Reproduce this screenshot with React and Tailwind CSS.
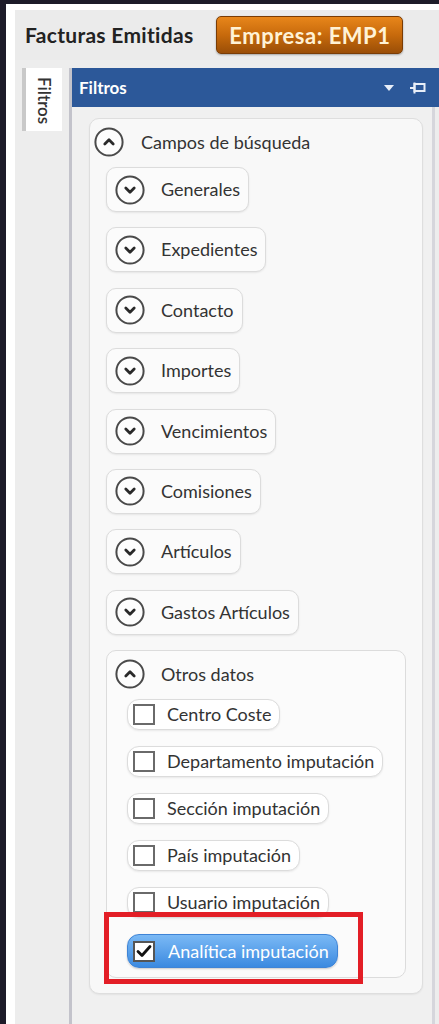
import React from "react";

const font = { fontFamily: 'Lato, "Open Sans", "Liberation Sans", sans-serif' };

function CircleChevron({ up = false }) {
  return (
    <svg width="30" height="30" viewBox="0 0 30 30" className="shrink-0">
      <circle cx="15" cy="15" r="13.6" fill="#fdfdfd" stroke="#4a4a4a" strokeWidth="2" />
      {up ? (
        <path d="M10.8 17 L15 12.8 L19.2 17" fill="none" stroke="#2a2a2a" strokeWidth="2.8" strokeLinecap="round" strokeLinejoin="round" />
      ) : (
        <path d="M10.8 13 L15 17.2 L19.2 13" fill="none" stroke="#2a2a2a" strokeWidth="2.8" strokeLinecap="round" strokeLinejoin="round" />
      )}
    </svg>
  );
}

function Pill({ label }) {
  return (
    <div className="self-start h-[45px] flex items-center pl-[8px] pr-[8px] gap-[16px] rounded-[10px] border border-[#dcdcdc] bg-[#fbfbfb] shadow-[0_1px_2px_rgba(0,0,0,0.08)]">
      <CircleChevron />
      <span className="text-[18px] text-[#333]">{label}</span>
    </div>
  );
}

function CheckPill({ label, checked = false }) {
  if (checked) {
    return (
      <div className="self-start h-[34px] flex items-center pl-[5px] pr-[8px] gap-[13px] rounded-[12px] border border-[#3f84d6] bg-gradient-to-b from-[#7ab9f5] to-[#3b8ae0] shadow-[0_1px_2px_rgba(0,0,0,0.2)]">
        <div className="w-[22px] h-[21px] border-2 border-[#555] bg-white flex items-center justify-center">
          <svg width="16" height="14" viewBox="0 0 16 14">
            <path d="M2 7.5 L6 11.5 L14 2.5" fill="none" stroke="#111" strokeWidth="2.8" strokeLinecap="round" strokeLinejoin="round" />
          </svg>
        </div>
        <span className="text-[18px] text-white">{label}</span>
      </div>
    );
  }
  return (
    <div className="self-start h-[31px] flex items-center pl-[5px] pr-[8px] gap-[12px] rounded-[12px] border border-[#dcdcdc] bg-white shadow-[0_1px_2px_rgba(0,0,0,0.08)]">
      <div className="w-[22px] h-[21px] border-2 border-[#6a6a6a] bg-white" />
      <span className="text-[18px] text-[#333]">{label}</span>
    </div>
  );
}

export default function App() {
  const groups = ["Generales", "Expedientes", "Contacto", "Importes", "Vencimientos", "Comisiones", "Artículos", "Gastos Artículos"];
  const checks = ["Centro Coste", "Departamento imputación", "Sección imputación", "País imputación", "Usuario imputación"];
  return (
    <div className="w-[439px] h-[1024px] bg-[#1d1b29] pt-[4px] pl-[6px] overflow-hidden" style={font}>
      <div className="h-full bg-white pt-[6px] pl-[9px] flex flex-col">
        <div className="flex-1 bg-[#ededed] flex flex-col">
          <div className="h-[50px] shrink-0 flex items-center pl-[10px] bg-[#ebebeb]">
            <span className="text-[21px] font-bold text-[#222] tracking-[0.3px]">Facturas Emitidas</span>
            <div className="ml-[23px] h-[38px] w-[187px] flex items-center justify-center rounded-[5px] border border-[#7a3c05] bg-gradient-to-b from-[#e8861a] via-[#c76a0c] to-[#9a4e07] shadow-[0_1px_2px_rgba(0,0,0,0.3)]">
              <span className="text-[22px] font-bold text-[#fff2d6] tracking-[0.5px]">Empresa: EMP1</span>
            </div>
          </div>
          <div className="flex-1 flex pt-[8px] min-h-0">
            <div className="w-[54px] shrink-0 pl-[7px]">
              <div className="w-[40px] h-[63px] bg-white border-l-[4px] border-[#c9c9c9] flex justify-center pt-[9px]">
                <span className="[writing-mode:vertical-rl] text-[17px] font-semibold text-[#333]">Filtros</span>
              </div>
            </div>
            <div className="flex-1 flex flex-col border-l-[3px] border-[#c3c3cb]">
              <div className="h-[39px] shrink-0 bg-[#2c5899] flex items-center pl-[7px] pr-[13px]">
                <span className="text-[17px] font-bold text-white flex-1">Filtros</span>
                <svg width="10" height="6" viewBox="0 0 10 6" className="mr-[16px]">
                  <path d="M0 0 L10 0 L5 6 Z" fill="#e8eef8" />
                </svg>
                <svg width="16" height="12" viewBox="0 0 16 12">
                  <path d="M0 6 H4" stroke="#e8eef8" strokeWidth="2" />
                  <rect x="4.5" y="2" width="10" height="7" fill="none" stroke="#e8eef8" strokeWidth="2" />
                  <path d="M4.5 0.5 V11.5" stroke="#e8eef8" strokeWidth="2" />
                </svg>
              </div>
              <div className="flex-1 bg-[#f0f0f0] border-r-[3px] border-[#d6d6dc] mr-[4px] pl-[17px] pt-[11px]">
                <div className="w-[334px] rounded-[10px] border border-[#dedede] bg-[#f8f8f8] pt-[8px] pl-[4px] pb-[15px] shadow-[0_1px_2px_rgba(0,0,0,0.06)]">
                  <div className="flex items-center gap-[17px]">
                    <CircleChevron up />
                    <span className="text-[18px] text-[#333]">Campos de búsqueda</span>
                  </div>
                  <div className="mt-[10px] ml-[12px] flex flex-col gap-[15.4px]">
                    {groups.map((g) => (
                      <Pill key={g} label={g} />
                    ))}
                    <div className="w-[300px] rounded-[10px] border border-[#dcdcdc] bg-[#fbfbfb] pt-[8px] pl-[8px] pb-[9px]">
                      <div className="flex items-center gap-[16px]">
                        <CircleChevron up />
                        <span className="text-[18px] text-[#333]">Otros datos</span>
                      </div>
                      <div className="mt-[10px] ml-[12px] flex flex-col gap-[16px]">
                        {checks.map((c) => (
                          <CheckPill key={c} label={c} />
                        ))}
                        <div className="relative self-start">
                          <CheckPill label="Analítica imputación" checked />
                          <div className="absolute left-[-23px] top-[-22px] w-[259px] h-[72px] border-[5px] border-[#e31e26]" />
                        </div>
                      </div>
                    </div>
                  </div>
                </div>
              </div>
            </div>
          </div>
        </div>
      </div>
    </div>
  );
}
